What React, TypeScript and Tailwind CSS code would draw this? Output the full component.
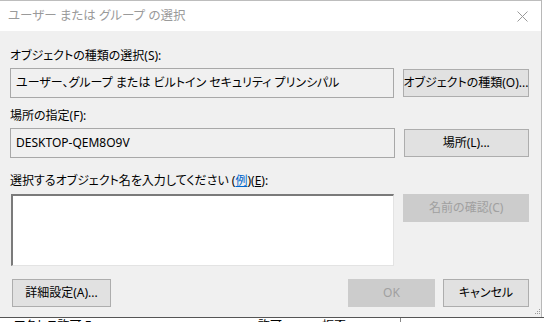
import React from "react";

const font = { fontFamily: '"Noto Sans", "Noto Sans CJK JP", sans-serif' };

function Btn({ children, disabled, className = "" }: { children: React.ReactNode; disabled?: boolean; className?: string }) {
  return (
    <div
      className={`h-[28px] flex items-center justify-center whitespace-nowrap text-[12px] leading-none border ${
        disabled ? "bg-[#cccccc] border-[#cccccc] text-[#a0a0a0]" : "bg-[#e1e1e1] border-[#adadad] text-black"
      } ${className}`}
    >
      {children}
    </div>
  );
}

export default function App() {
  return (
    <div className="w-[544px] h-[322px] overflow-hidden bg-white flex flex-col [font-feature-settings:'palt']" style={font}>
      <div className="flex h-[317px]">
        <div className="w-[541px] flex flex-col border-t border-[#bdbdbd]">
          {/* title bar */}
          <div className="h-[30px] bg-white flex items-center justify-between pl-[8px] pr-[12px]">
            <span className="text-[12.5px] text-[#9a9a9a]">ユーザー または グループ の選択</span>
            <svg width="11" height="11" viewBox="0 0 11 11" className="mr-[1px]">
              <path d="M0.5 0.5 L10.5 10.5 M10.5 0.5 L0.5 10.5" stroke="#9a9a9a" strokeWidth="1" />
            </svg>
          </div>
          {/* body */}
          <div className="flex-1 bg-[#f0f0f0] pl-[10px] pr-[12px] pt-[17px] flex flex-col relative">
            <div className="text-[12px] leading-[16px] text-black">オブジェクトの種類の選択(S):</div>
            <div className="flex gap-[9px] mt-[4px] items-start">
              <div className="w-[386px] h-[30px] border border-[#a8a8a8] bg-[#f0f0f0] flex items-center pl-[5px] text-[12px] text-black whitespace-nowrap">
                ユーザー、グループ または ビルトイン セキュリティ プリンシパル
              </div>
              <Btn className="w-[126px] mt-[1px]">オブジェクトの種類(O)...</Btn>
            </div>
            <div className="text-[12px] leading-[16px] text-black mt-[10px]">場所の指定(F):</div>
            <div className="flex gap-[9px] mt-[4px] items-start">
              <div className="w-[386px] h-[30px] border border-[#a8a8a8] bg-[#f0f0f0] flex items-center pl-[5px] text-[12px] text-black">
                DESKTOP-QEM8O9V
              </div>
              <Btn className="w-[126px] mt-[1px]">場所(L)...</Btn>
            </div>
            <div className="text-[12px] leading-[16px] text-black mt-[15px]">
              選択するオブジェクト名を入力してください (
              <span className="text-[#0066cc] underline">例</span>)(<span className="underline">E</span>):
            </div>
            <div className="flex gap-[9px] mt-[5px] items-start">
              <div className="w-[385px] ml-[1px] h-[72px] bg-white border-t-2 border-l-2 border-[#7a7a7a] border-b border-r border-b-[#e3e3e3] border-r-[#e3e3e3]" />
              <Btn disabled className="w-[126px]">名前の確認(C)</Btn>
            </div>
            <div className="flex items-start mt-[13px]">
              <Btn className="w-[99px] ml-[2px]">詳細設定(A)...</Btn>
              <div className="flex-1" />
              <Btn disabled className="w-[87px]">OK</Btn>
              <Btn className="w-[86px] ml-[8px]">キャンセル</Btn>
            </div>
            <div className="absolute right-[1px] bottom-[3px] grid grid-cols-3 gap-[1px]">
              <span />
              <span />
              <span className="w-[1px] h-[1px] bg-[#9a9a9a]" />
              <span />
              <span className="w-[1px] h-[1px] bg-[#9a9a9a]" />
              <span className="w-[1px] h-[1px] bg-[#9a9a9a]" />
              <span className="w-[1px] h-[1px] bg-[#9a9a9a]" />
              <span className="w-[1px] h-[1px] bg-[#9a9a9a]" />
              <span className="w-[1px] h-[1px] bg-[#9a9a9a]" />
            </div>
          </div>
        </div>
        <div className="w-[1px] bg-[#b8b8b8]" />
        <div className="flex-1 bg-white" />
      </div>
      {/* background window peeking below */}
      <div className="h-[5px] border-t border-[#555] bg-white relative overflow-hidden">
        <div className="flex h-full">
          <div className="w-[400px] relative overflow-hidden">
            <span className="absolute left-[14px] top-[1px] text-[12px] leading-[14px] text-black whitespace-nowrap">アクセス許可 Everyone</span>
            <span className="absolute left-[258px] top-[1px] text-[12px] leading-[14px] text-black whitespace-nowrap">許可</span>
            <span className="absolute left-[322px] top-[1px] text-[12px] leading-[14px] text-black whitespace-nowrap">拒否</span>
          </div>
          <div className="w-[1px] bg-[#888]" />
          <div className="flex-1" />
        </div>
      </div>
    </div>
  );
}
